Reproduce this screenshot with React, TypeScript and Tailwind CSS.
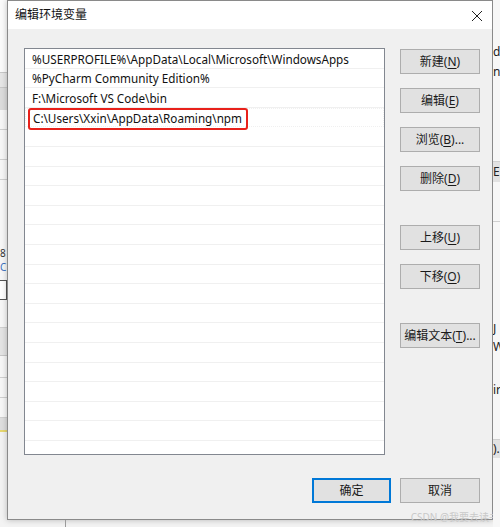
import React from "react";

const ROWS = [
  "%USERPROFILE%\\AppData\\Local\\Microsoft\\WindowsApps",
  "%PyCharm Community Edition%",
  "F:\\Microsoft VS Code\\bin",
  "C:\\Users\\Xxin\\AppData\\Roaming\\npm",
];

const FONT = { fontFamily: '"Noto Sans", "Noto Sans CJK SC", sans-serif' };

function Btn({ label, hot, tail = "", className = "" }: { label: string; hot?: string; tail?: string; className?: string }) {
  return (
    <div
      className={`flex h-[25px] w-[80px] shrink-0 items-center justify-center border border-[#adadad] bg-[#e1e1e1] text-[12px] text-[#1a1a1a] ${className}`}
    >
      {label}
      {hot && (
        <>
          (<span className="underline underline-offset-2">{hot}</span>)
        </>
      )}
      {tail}
    </div>
  );
}

function LeftStrip() {
  return (
    <div className="flex w-[7px] shrink-0 flex-col overflow-hidden bg-[#f7f7f7]">
      <div className="h-[72px] bg-[#fbfbfb]" />
      <div className="h-[16px] border-y border-[#c8c8c8] bg-[#e6e6e6]" />
      <div className="h-[22px] bg-[#dcdcdc]" />
      <div className="h-[20px] border-b border-[#d0d0d0]" />
      <div className="h-[30px] border-b border-[#d0d0d0]" />
      <div className="h-[20px] border-b border-[#d0d0d0]" />
      <div className="h-[66px]" />
      <div className="h-[14px] text-[10px] leading-[14px] text-[#333]">8</div>
      <div className="h-[14px] text-[10px] leading-[14px] text-[#3a6fc0]">C</div>
      <div className="h-[6px]" />
      <div className="h-[20px] border-y border-r border-[#555] bg-white" />
      <div className="h-[28px] border-b border-[#d0d0d0]" />
      <div className="h-[28px] border-b border-[#c8c8c8] bg-[#e4e4e4]" />
      <div className="h-[22px] border-b border-[#d0d0d0]" />
      <div className="h-[20px] border-b border-[#d0d0d0]" />
      <div className="h-[20px] border-b border-[#d0d0d0]" />
      <div className="h-[12px] bg-[#dedede]" />
      <div className="h-[2px] bg-[#e8d870]" />
      <div className="flex-1 bg-[#f3f3f3]" />
    </div>
  );
}

function RightStrip() {
  return (
    <div className="flex w-[7px] shrink-0 flex-col overflow-hidden bg-[#f7f7f7] text-[12px] text-[#222]">
      <div className="h-[42px]" />
      <div className="h-[20px] leading-[20px]">dc</div>
      <div className="h-[20px] leading-[20px]">ni</div>
      <div className="h-[80px] border-b border-[#d0d0d0]" />
      <div className="h-[20px] bg-[#e2e2e2] leading-[20px]">E)</div>
      <div className="h-[40px] border-b border-[#d0d0d0]" />
      <div className="h-[98px]" />
      <div className="h-[18px] leading-[18px]">J</div>
      <div className="h-[18px] leading-[18px]">W</div>
      <div className="h-[24px]" />
      <div className="h-[20px] leading-[20px]">ir</div>
      <div className="h-[40px] border-b border-[#d0d0d0]" />
      <div className="h-[18px] bg-[#e2e2e2] leading-[18px]">).</div>
      <div className="flex-1" />
    </div>
  );
}

export default function App() {
  const emptyRows = Array.from({ length: 17 });
  return (
    <div className="flex h-[527px] w-[500px] overflow-hidden bg-[#f3f3f3]" style={FONT}>
      <LeftStrip />
      <div className="flex w-[486px] shrink-0 flex-col">
        <div className="flex h-[520px] flex-col border border-[#8a8a8a] bg-[#f0f0f0] shadow-[0_0_6px_rgba(0,0,0,0.25)]">
          {/* title bar */}
          <div className="flex h-[28px] items-center justify-between bg-white pl-[7px] pr-[9px]">
            <span className="text-[12px] text-[#111]">编辑环境变量</span>
            <svg width="12" height="12" viewBox="0 0 12 12" className="mt-[2px]">
              <path d="M1 1 L11 11 M11 1 L1 11" stroke="#222" strokeWidth="1" />
            </svg>
          </div>

          {/* body */}
          <div className="flex flex-1 flex-col pl-[16px] pr-[12px] pt-[19px]">
            <div className="flex">
              {/* list */}
              <div className="h-[407px] w-[361px] shrink-0 overflow-hidden border border-[#828790] bg-white">
                {ROWS.map((r, i) => (
                  <div
                    key={i}
                    className={`relative flex h-[19.6px] items-center border-b border-[#f0f0f0] pl-[7px] pt-[2px] text-[11.7px] text-[#111] ${
                      i === 3 ? "border border-dotted border-[#444]" : ""
                    }`}
                  >
                    {r}
                    {i === 3 && (
                      <div className="absolute left-[2px] top-[-1px] h-[22px] w-[220px] rounded-[3px] border-[2.5px] border-[#e8211b]" />
                    )}
                  </div>
                ))}
                {emptyRows.map((_, i) => (
                  <div key={i} className="h-[19.6px] border-b border-[#f0f0f0]" />
                ))}
              </div>

              {/* side buttons */}
              <div className="ml-[15px] flex flex-col pt-[1px]">
                <Btn label="新建" hot="N" />
                <Btn label="编辑" hot="E" className="mt-[14px]" />
                <Btn label="浏览" hot="B" tail="..." className="mt-[14px]" />
                <Btn label="删除" hot="D" className="mt-[14px]" />
                <Btn label="上移" hot="U" className="mt-[34px]" />
                <Btn label="下移" hot="O" className="mt-[14px]" />
                <Btn label="编辑文本" hot="T" tail="..." className="mt-[34px]" />
              </div>
            </div>

            {/* bottom buttons */}
            <div className="mt-[23px] flex justify-end gap-[9px]">
              <div className="flex h-[25px] w-[79px] items-center justify-center border-2 border-[#0078d7] bg-[#e1e1e1] text-[12px] text-[#1a1a1a]">
                确定
              </div>
              <Btn label="取消" />
            </div>
          </div>
        </div>
        <div className="flex flex-1">
          <div className="w-[58px]" />
          <div className="w-px bg-[#9a9a9a]" />
          <div className="flex-1" />
          <div className="-mt-[9px] mr-[-6px] text-[10px] leading-[12px] text-[#c9c9c9]">CSDN @我要去读书</div>
        </div>
      </div>
      <RightStrip />
    </div>
  );
}
